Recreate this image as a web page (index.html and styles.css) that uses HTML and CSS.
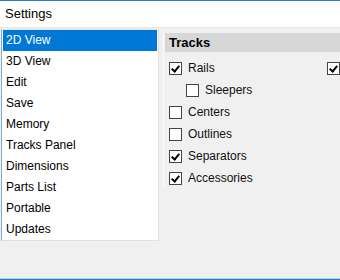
FILE: index.html
```html
<!DOCTYPE html>
<html lang="en">
<head>
    <meta charset="UTF-8">
    <title>Settings</title>
    <link rel="stylesheet" href="styles.css">
</head>
<body>
    <div class="window">
        <!-- Barra de título -->
        <div class="titlebar">Settings</div>

        <div class="content">
            <!-- Lista de secciones -->
            <ul class="section-list">
                <li class="selected">2D View</li>
                <li>3D View</li>
                <li>Edit</li>
                <li>Save</li>
                <li>Memory</li>
                <li>Tracks Panel</li>
                <li>Dimensions</li>
                <li>Parts List</li>
                <li>Portable</li>
                <li>Updates</li>
            </ul>

            <!-- Panel de opciones -->
            <div class="panel">
                <div class="panel-header">Tracks</div>
                <div class="options">
                    <div class="option-row">
                        <label class="check"><span class="box checked"></span>Rails</label>
                        <label class="check check-right"><span class="box checked"></span></label>
                    </div>
                    <label class="check indent"><span class="box"></span>Sleepers</label>
                    <label class="check"><span class="box"></span>Centers</label>
                    <label class="check"><span class="box"></span>Outlines</label>
                    <label class="check"><span class="box checked"></span>Separators</label>
                    <label class="check"><span class="box checked"></span>Accessories</label>
                </div>
            </div>
        </div>

        <div class="bottom-line"></div>
    </div>
</body>
</html>
```

FILE: styles.css
```css
* {
    margin: 0;
    padding: 0;
    box-sizing: border-box;
}

body {
    font-family: 'Liberation Sans', Arial, sans-serif;
    background: #f0f0f0;
    color: #000;
    width: 340px;
    height: 280px;
    overflow: hidden;
}

.window {
    height: 280px;
    display: flex;
    flex-direction: column;
}

/* Barra de título */
.titlebar {
    height: 28px;
    background: #fff;
    border-top: 1px solid #2b7bd0;
    border-bottom: 1px solid #e6e6e6;
    font-size: 13px;
    line-height: 25px;
    padding-left: 5px;
}

.content {
    flex: 1;
    display: flex;
    align-items: flex-start;
    padding-top: 1px;
}

/* Lista */
.section-list {
    list-style: none;
    width: 158px;
    margin-left: 1px;
    background: #fff;
    border: 1px solid #e2e2e2;
    border-left-color: #7ea9d8;
    padding: 0 1px;
}

.section-list li {
    height: 21px;
    line-height: 21px;
    font-size: 12px;
    padding-left: 3px;
}

.section-list li.selected {
    background: #0078d7;
    color: #fff;
}

/* Panel */
.panel {
    flex: 1;
    margin-left: 4px;
    margin-top: 4px;
    border-left: 1px solid #fbfbfb;
    padding-left: 1px;
}

.panel-header {
    height: 19px;
    background: #d7d7d7;
    font-weight: bold;
    font-size: 13px;
    line-height: 19px;
    padding-left: 4px;
}

.options {
    padding: 5px 0 0 4px;
}

.option-row {
    display: flex;
    justify-content: space-between;
}

.check {
    display: flex;
    align-items: center;
    height: 22px;
    font-size: 12px;
    color: #111;
}

.check.indent {
    padding-left: 17px;
}

.check-right .box {
    margin-right: 0;
}

.box {
    width: 13px;
    height: 13px;
    border: 1px solid #444;
    background: #fff;
    margin-right: 6px;
    position: relative;
}

.box.checked::after {
    content: "";
    position: absolute;
    left: 3px;
    top: 1px;
    width: 3px;
    height: 6px;
    border: solid #000;
    border-width: 0 2px 2px 0;
    transform: rotate(40deg);
}

.bottom-line {
    height: 2px;
    background: #2b7bd0;
    border-top: 1px solid #a9d0f2;
}
```
